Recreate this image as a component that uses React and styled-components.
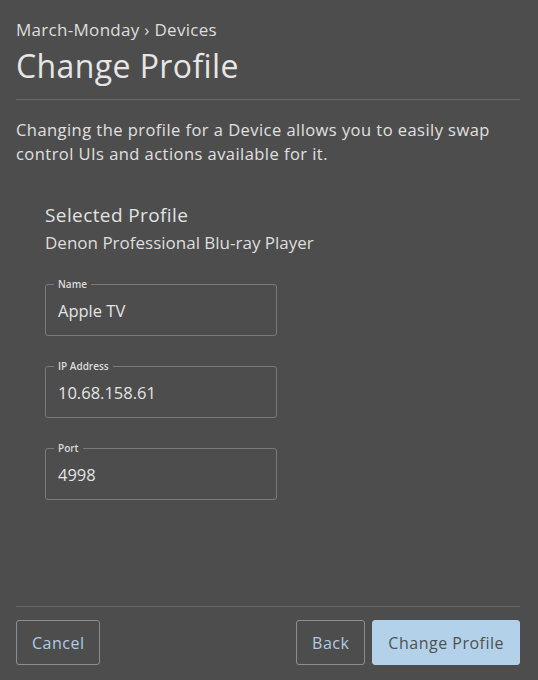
import React from 'react'
import styled, { createGlobalStyle } from 'styled-components'

const Global = createGlobalStyle`
  html, body {
    margin: 0;
    padding: 0;
    background: #4d4d4d;
  }
  body {
    font-family: "Open Sans", "Noto Sans", sans-serif;
    color: #e2e2e2;
  }
`

const Page = styled.div`
  width: 538px;
  height: 680px;
  box-sizing: border-box;
  padding: 18px 18px 15px 16px;
  display: flex;
  flex-direction: column;
`

const Crumbs = styled.div`
  font-size: 17px;
  line-height: 24px;
  letter-spacing: 0.3px;
  color: #dedede;
`

const Title = styled.h1`
  margin: 4px 0 0;
  font-size: 32px;
  font-weight: 400;
  line-height: 40px;
  letter-spacing: 0.4px;
  color: #e6e6e6;
  padding-bottom: 13px;
  border-bottom: 1px solid #676767;
`

const Intro = styled.p`
  margin: 18px 0 0;
  font-size: 16.5px;
  line-height: 24px;
  letter-spacing: 0.45px;
  color: #e0e0e0;
`

const Section = styled.div`
  padding: 36px 0 0 29px;
  display: flex;
  flex-direction: column;
`

const SectionTitle = styled.div`
  font-size: 19px;
  line-height: 26px;
  letter-spacing: 0.4px;
  color: #e2e2e2;
`

const SectionSub = styled.div`
  margin-top: 4px;
  font-size: 17px;
  line-height: 22px;
  color: #dedede;
`

const Fields = styled.div`
  margin-top: 24px;
  display: flex;
  flex-direction: column;
  gap: 24px;
`

const Field = styled.fieldset`
  margin: 0;
  width: 232px;
  height: 58px;
  box-sizing: border-box;
  padding: 0 12px;
  border: 1px solid #7a7a7a;
  border-radius: 3px;
`

const Legend = styled.legend`
  font-size: 10px;
  font-weight: 600;
  line-height: 12px;
  padding: 0 4px;
  margin-left: -4px;
  color: #dcdcdc;
`

const Value = styled.div`
  font-size: 16.5px;
  line-height: 24px;
  padding-top: 9px;
  color: #e4e4e4;
`

const Spacer = styled.div`
  flex: 1;
`

const Footer = styled.div`
  border-top: 1px solid #676767;
  padding-top: 13px;
  display: flex;
  gap: 7px;
  align-items: center;
`

const Button = styled.button`
  height: 45px;
  box-sizing: border-box;
  padding: 0 15px;
  font-family: inherit;
  font-size: 16px;
  letter-spacing: 0.5px;
  border-radius: 3px;
  border: 1px solid ${p => (p.$primary ? '#b3d1e8' : '#8a8f96')};
  background: ${p => (p.$primary ? '#b3d1e8' : 'transparent')};
  color: ${p => (p.$primary ? '#4e5256' : '#b2cbe0')};
  margin-left: ${p => (p.$push ? 'auto' : '0')};
`

const fields = [
  { label: 'Name', value: 'Apple TV' },
  { label: 'IP Address', value: '10.68.158.61' },
  { label: 'Port', value: '4998' },
]

export default function App() {
  return (
    <>
      <Global />
      <Page>
        <Crumbs>March-Monday › Devices</Crumbs>
        <Title>Change Profile</Title>
        <Intro>
          Changing the profile for a Device allows you to easily swap control UIs and actions available for it.
        </Intro>
        <Section>
          <SectionTitle>Selected Profile</SectionTitle>
          <SectionSub>Denon Professional Blu-ray Player</SectionSub>
          <Fields>
            {fields.map(f => (
              <Field key={f.label}>
                <Legend>{f.label}</Legend>
                <Value>{f.value}</Value>
              </Field>
            ))}
          </Fields>
        </Section>
        <Spacer />
        <Footer>
          <Button>Cancel</Button>
          <Button $push>Back</Button>
          <Button $primary>Change Profile</Button>
        </Footer>
      </Page>
    </>
  )
}
